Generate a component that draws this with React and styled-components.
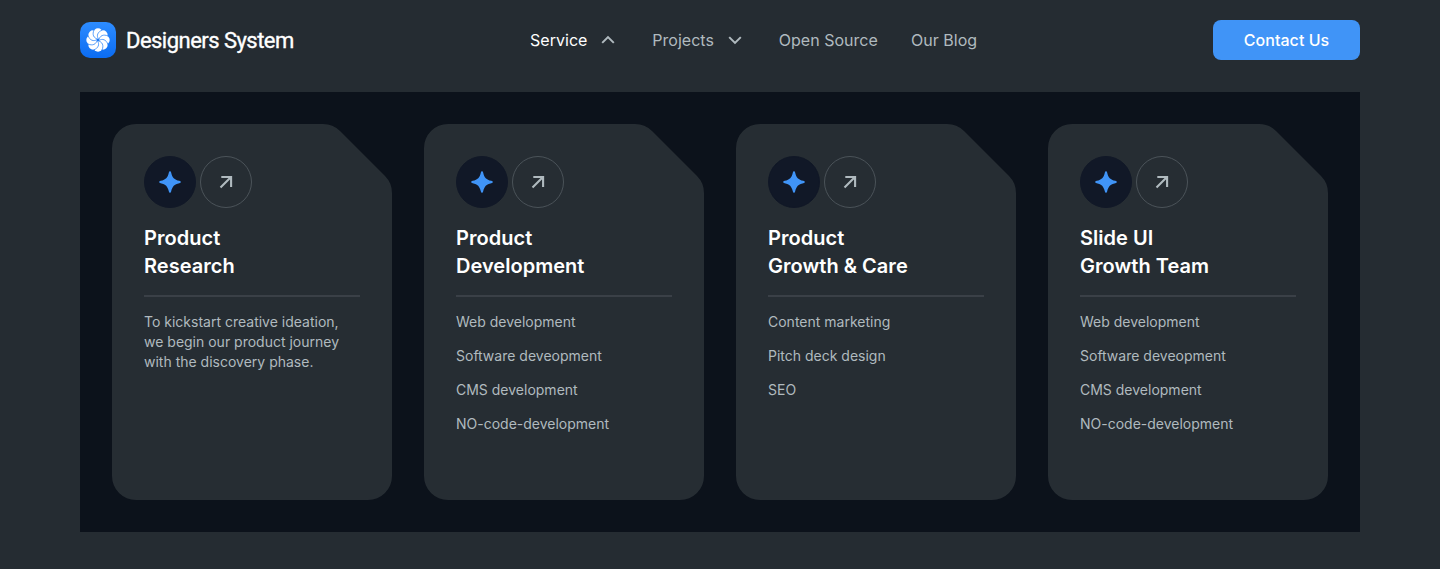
import React from "react";
import styled, { createGlobalStyle } from "styled-components";

const GlobalStyle = createGlobalStyle`
  *, *::before, *::after { box-sizing: border-box; }
  body {
    margin: 0;
    background: #252c32;
    font-family: Inter, "Liberation Sans", sans-serif;
  }
`;

const Page = styled.div`
  height: 569px;
  padding: 0 80px;
  overflow: hidden;
`;

const Header = styled.header`
  display: grid;
  grid-template-columns: 450px 1fr auto;
  align-items: center;
  height: 80px;
  margin-bottom: 12px;
`;

const Brand = styled.a`
  display: flex;
  align-items: center;
  gap: 10px;
  color: #fff;
  font: 400 22px/28px Roboto, sans-serif;
  letter-spacing: -0.53px;
  -webkit-text-stroke: 0.35px #fff;
  white-space: nowrap;
`;

const BrandName = styled.span`
  padding-top: 2px;
`;

const Nav = styled.nav`
  display: flex;
  align-items: center;
  gap: 33px;
`;

const NavItem = styled.a`
  display: flex;
  align-items: center;
  gap: 11px;
  color: ${(p) => (p.$active ? "#fff" : "#b0babf")};
  font-size: 16px;
  line-height: 24px;
  letter-spacing: 0.03px;
  white-space: nowrap;
`;

const Button = styled.button`
  width: 147px;
  height: 40px;
  padding: 0;
  border: 0;
  border-radius: 8px;
  background: #4094f7;
  color: #fff;
  font: 500 16px/24px Inter, sans-serif;
  letter-spacing: 0.05px;
`;

const Panel = styled.main`
  display: grid;
  grid-template-columns: repeat(4, 280px);
  gap: 32px;
  height: 440px;
  padding: 32px;
  background: #0c121b;
`;

const Card = styled.article`
  padding: 32px;
  background: #262d33;
  clip-path: path("M24 0 H211 A24 24 0 0 1 228 7 L273 52 A24 24 0 0 1 280 69 V352 A24 24 0 0 1 256 376 H24 A24 24 0 0 1 0 352 V24 A24 24 0 0 1 24 0 Z");
`;

const IconRow = styled.div`
  display: flex;
  gap: 4px;
  margin-bottom: 16px;
`;

const Circle = styled.span`
  display: flex;
  align-items: center;
  justify-content: center;
  width: 52px;
  height: 52px;
  border-radius: 50%;
  border: 1px solid ${(p) => (p.$filled ? "#111827" : "#4b5359")};
  background: ${(p) => (p.$filled ? "#111827" : "transparent")};
`;

const Title = styled.h2`
  margin: 0 0 15px;
  color: #fff;
  font-size: 20px;
  font-weight: 600;
  line-height: 28px;
  letter-spacing: 0.03px;
  white-space: pre-line;
`;

const Divider = styled.hr`
  height: 2px;
  margin: 0 0 15px;
  border: 0;
  background: #3a4047;
`;

const Copy = styled.p`
  margin: 0;
  color: #b0babf;
  font-size: 14px;
  line-height: 20px;
  white-space: pre-line;
`;

const List = styled.ul`
  display: flex;
  flex-direction: column;
  gap: 14px;
  margin: 0;
  padding: 0;
  list-style: none;
`;

const turns = [0, 1, 2, 3, 4, 5, 6, 7].map((n) => n * 45);

function Logo() {
  return (
    <svg width="36" height="36" viewBox="0 0 36 36">
      <defs>
        <linearGradient id="logo-fill" x1="0" y1="0" x2="0" y2="1">
          <stop offset="0" stopColor="#2d8cff" />
          <stop offset="1" stopColor="#0b6cf2" />
        </linearGradient>
      </defs>
      <rect width="36" height="36" rx="10" fill="url(#logo-fill)" />
      <g transform="translate(18 18)">
        <circle r="9.6" fill="#fff" />
        {turns.map((a) => (
          <circle key={a} transform={`rotate(${a})`} cy="-7" r="4.7" fill="#fff" />
        ))}
        {turns.map((a) => (
          <path
            key={a}
            transform={`rotate(${a + 22.5})`}
            d="M0 -1.2 C-3.2 -3.2 -3.6 -7.4 .2 -10.8"
            fill="none"
            stroke="#1c7cf8"
            strokeWidth=".65"
          />
        ))}
        <circle r="1.3" fill="#1c7cf8" />
      </g>
    </svg>
  );
}

const ChevronSvg = styled.svg`
  margin-right: 0.8px;
`;

function Chevron({ up }) {
  return (
    <ChevronSvg width="20" height="20" viewBox="0 0 20 20" fill="none" stroke="#b0babf" strokeWidth="2">
      <path d={up ? "M4.2 12.9 10 7.1l5.8 5.8" : "M4.2 7.1 10 12.9l5.8-5.8"} />
    </ChevronSvg>
  );
}

function Sparkle() {
  return (
    <svg width="24" height="24" viewBox="0 0 24 24">
      <path
        d="M12 1.2c.7 0 1 .6 1.2 1.5 1.1 5 3.1 7 8.1 8.1.9.2 1.5.5 1.5 1.2s-.6 1-1.5 1.2c-5 1.1-7 3.1-8.1 8.1-.2.9-.5 1.5-1.2 1.5s-1-.6-1.2-1.5c-1.1-5-3.1-7-8.1-8.1-.9-.2-1.5-.5-1.5-1.2s.6-1 1.5-1.2c5-1.1 7-3.1 8.1-8.1.2-.9.5-1.5 1.2-1.5Z"
        fill="#4094f7"
      />
    </svg>
  );
}

function ArrowUpRight() {
  return (
    <svg width="24" height="24" viewBox="0 0 24 24" fill="none" stroke="#b0babf" strokeWidth="2.1">
      <path d="M6.5 17.5 17 7M7.3 7H17.1v9.9" />
    </svg>
  );
}

const development = ["Web development", "Software deveopment", "CMS development", "NO-code-development"];

const services = [
  {
    title: "Product\nResearch",
    copy: "To kickstart creative ideation,\nwe begin our product journey\nwith the discovery phase.",
  },
  { title: "Product\nDevelopment", items: development },
  { title: "Product\nGrowth & Care", items: ["Content marketing", "Pitch deck design", "SEO"] },
  { title: "Slide UI\nGrowth Team", items: development },
];

function ServiceCard({ title, copy, items }) {
  return (
    <Card>
      <IconRow>
        <Circle $filled><Sparkle /></Circle>
        <Circle><ArrowUpRight /></Circle>
      </IconRow>
      <Title>{title}</Title>
      <Divider />
      {copy && <Copy>{copy}</Copy>}
      {items && (
        <List>
          {items.map((item) => (
            <Copy as="li" key={item}>{item}</Copy>
          ))}
        </List>
      )}
    </Card>
  );
}

export default function App() {
  return (
    <>
      <GlobalStyle />
      <Page>
        <Header>
          <Brand><Logo /><BrandName>Designers System</BrandName></Brand>
          <Nav>
            <NavItem $active>Service<Chevron up /></NavItem>
            <NavItem>Projects<Chevron /></NavItem>
            <NavItem>Open Source</NavItem>
            <NavItem>Our Blog</NavItem>
          </Nav>
          <Button>Contact Us</Button>
        </Header>
        <Panel>
          {services.map((s) => (
            <ServiceCard key={s.title} {...s} />
          ))}
        </Panel>
      </Page>
    </>
  );
}
